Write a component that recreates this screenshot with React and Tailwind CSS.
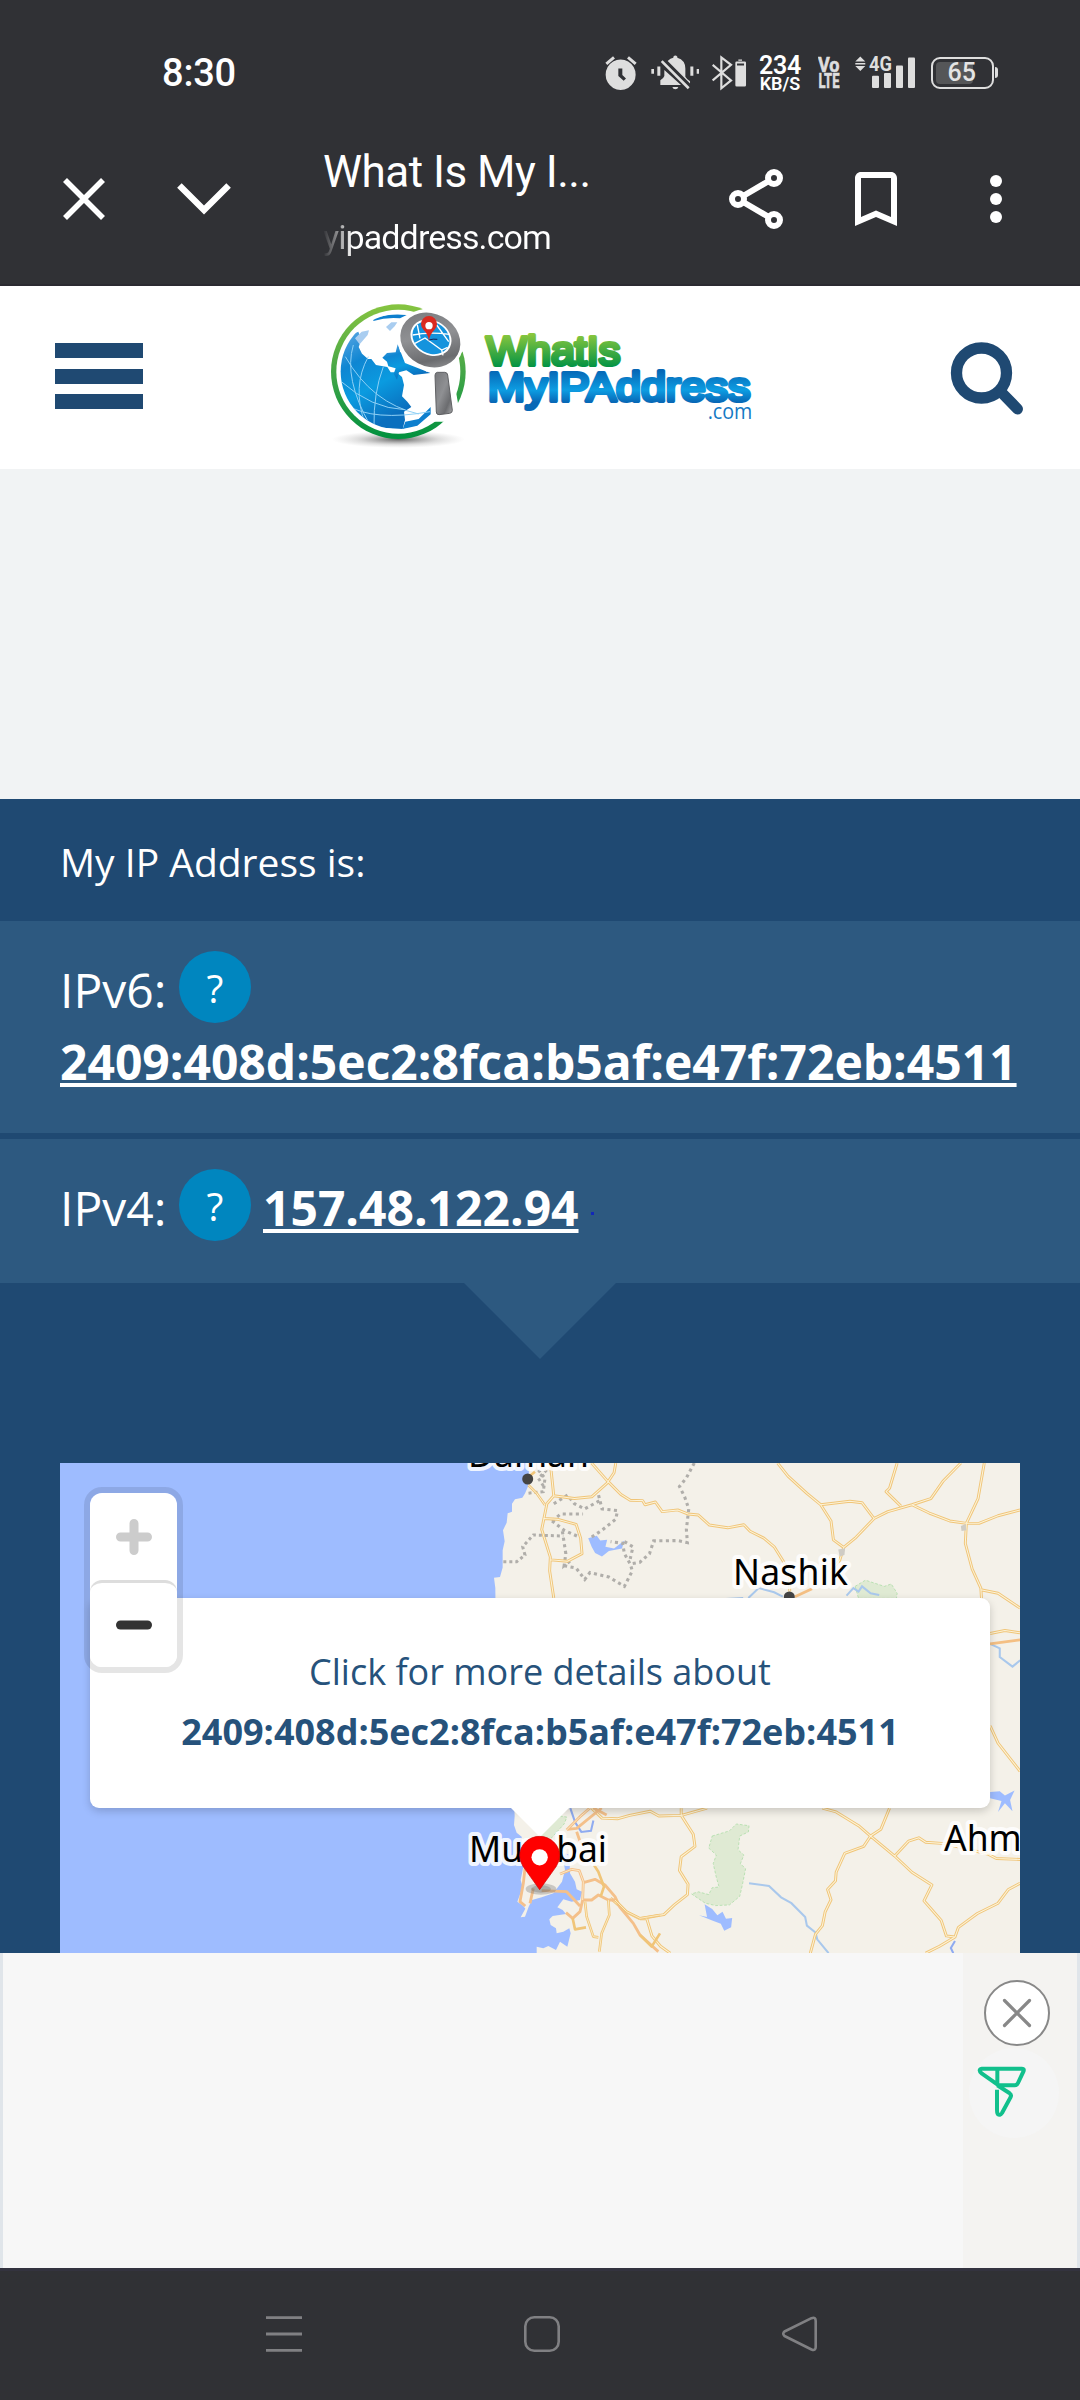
import React from "react";

const SANS = "font-['Open_Sans','Noto_Sans',sans-serif]";

function StatusGlyph({ x, w, className, children }) {
  return (
    <svg viewBox={`${x} 74 ${w} 106`} preserveAspectRatio="none" className={className} fill="#dedede">
      {children}
    </svg>
  );
}

function StatusBar() {
  return (
    <div className="flex h-[145px] items-center pl-[162px] pr-[82px] font-[Roboto,sans-serif] text-white">
      <span className="text-[38px] leading-none font-medium tracking-[-0.2px]">8:30</span>
      <div className="ml-auto flex items-center">
        <StatusGlyph x={136} w={96} className="h-9 w-8">
          <path fillRule="evenodd" d="M183 87a45 45 0 1 1-.1 0zM176 114v22l16 14 7-7-11-10v-19z" />
          <path d="M140 100l23-19M228 100l-23-19" stroke="#dedede" strokeWidth="9" />
        </StatusGlyph>
        <StatusGlyph x={272} w={146} className="ml-[14px] h-9 w-[48.7px]">
          <path d="M273 115h8v14h-8zM291 108h9v27h-9zM390 108h9v27h-9zM409 115h8v14h-8zM336 168h18q-2 7-9 7t-9-7z" />
          <path d="M300 162v-14q10-5 12-12v-18l50 44zM322 92q8-9 17-10v-3q6-7 12 0v3q24 7 24 32v24q3 6 14 13v7z" />
          <path d="M304 92l81 78" stroke="#303135" strokeWidth="18" />
          <path d="M304 92l81 80" stroke="#dedede" strokeWidth="8" />
        </StatusGlyph>
        <StatusGlyph x={456} w={104} className="ml-[12.5px] h-9 w-[34.7px]">
          <path d="M458 103l55 46-29 23V81l29 22-55 46" fill="none" stroke="#dedede" strokeWidth="6.5" />
          <path fillRule="evenodd" d="M535 87h11v4h-11zM530 93h24q4 0 4 4v66q0 4-4 4h-24q-4 0-4-4V97q0-4 4-4zM531 99v6h21v-6z" />
        </StatusGlyph>
        <div className="ml-[12px] flex w-[43px] flex-col items-center pt-[2px] font-semibold">
          <span className="text-[25px] leading-[20px] tracking-[-0.2px]">234</span>
          <span className="text-[18px] leading-[16px]">KB/S</span>
        </div>
        <svg viewBox="0 0 22 36" className="ml-[16px] h-9 w-[22px] fill-[#dedede] stroke-[#dedede] stroke-[0.6px] font-[Roboto,sans-serif] font-bold">
          <text x="0" y="17" fontSize="19.500" textLength="21.500" lengthAdjust="spacingAndGlyphs">Vo</text>
          <text x="0.500" y="33" fontSize="19.500" textLength="21" lengthAdjust="spacingAndGlyphs">LTE</text>
        </svg>
        <svg viewBox="0 0 61 36" className="ml-[15px] h-9 w-[61px] fill-[#dedede] font-[Roboto,sans-serif] font-bold">
          <path d="M5.3 1.400l5 5H.3zM.3 8h10v1.400H.3zM.3 11h10l-5 5z" />
          <text x="14" y="16" fontSize="20.500" textLength="23" lengthAdjust="spacingAndGlyphs">4G</text>
          <rect x="17" y="20.700" width="7" height="12.300" rx="1" />
          <rect x="29" y="18" width="7" height="15" rx="1" />
          <rect x="41" y="10.500" width="7" height="22.500" rx="1" />
          <rect x="53" y="2.400" width="7" height="30.600" rx="1" />
        </svg>
        <div className="ml-[15px] flex items-center">
          <div className="flex h-8 w-[63px] items-center rounded-[9px] border-2 border-[#dedede] p-[3px]">
            <div className="flex h-full w-[37px] items-center rounded-[4px] bg-[#555658] pl-[12px] text-[25px] font-medium text-[#e4e4e4]">
              65
            </div>
          </div>
          <div className="ml-[1.500px] h-[11px] w-[3px] rounded-r bg-[#dedede]" />
        </div>
      </div>
    </div>
  );
}

function Toolbar() {
  return (
    <div className="flex h-[141px] border-b-2 border-[#2b2a31] pl-[63px] text-white">
      <svg viewBox="0 0 42 42" className="mt-[33px] h-[42px] w-[42px]" stroke="#fff" strokeWidth="5.600">
        <path d="M2 2l38 38M40 2L2 40" />
      </svg>
      <svg viewBox="0 0 54 32" className="mt-[38px] ml-[72px] h-8 w-[54px]" fill="none" stroke="#fff" strokeWidth="6.400">
        <path d="M2.400 2.400L27 27 51.600 2.400" />
      </svg>
      <div className="ml-[92px] w-[275px] pt-px font-[Roboto,sans-serif] whitespace-nowrap">
        <div className="text-[44px] leading-[52px] tracking-[-0.500px]">What Is My I...</div>
        <div className="mt-[17px] bg-[linear-gradient(90deg,#303135_0px,#8a8a8c_14px,#fff_30px)] bg-clip-text text-[34px] leading-[44px] tracking-[-0.900px] text-transparent">
          yipaddress.com
        </div>
      </div>
      <div className="mt-[18px] ml-[122px] flex gap-12">
        <svg viewBox="0 0 24 24" className="h-[72px] w-[72px]" fill="none" stroke="#fff" strokeWidth="2">
          <path d="M6 12l12-7M6 12l12 7" />
          <g fill="#303135">
            <circle cx="18" cy="5" r="2" />
            <circle cx="6" cy="12" r="2" />
            <circle cx="18" cy="19" r="2" />
          </g>
        </svg>
        <svg viewBox="0 0 24 24" className="h-[72px] w-[72px]" fill="#fff">
          <path d="M17 3H7c-1.100 0-2 .9-2 2v16l7-3 7 3V5c0-1.100-.9-2-2-2zm0 15l-5-2.180L7 18V5h10v13z" />
        </svg>
        <svg viewBox="0 0 24 24" className="h-[72px] w-[72px]" fill="#fff">
          <circle cx="12" cy="6" r="2" />
          <circle cx="12" cy="12" r="2" />
          <circle cx="12" cy="18" r="2" />
        </svg>
      </div>
    </div>
  );
}

function Logo() {
  return (
    <svg viewBox="60 3 1320 549" className="h-[183px] w-[440px]">
      <defs>
        <linearGradient id="ring" x1="0" y1="0" x2="0" y2="1">
          <stop offset="0" stopColor="#86c440" />
          <stop offset="0.5" stopColor="#45a648" />
          <stop offset="1" stopColor="#00913f" />
        </linearGradient>
        <linearGradient id="sea" x1="0" y1="0" x2="0.4" y2="1">
          <stop offset="0" stopColor="#5fa8e4" />
          <stop offset="0.35" stopColor="#0f86d2" />
          <stop offset="0.65" stopColor="#0a9be0" />
          <stop offset="1" stopColor="#0a6fbe" />
        </linearGradient>
        <linearGradient id="metal" x1="0" y1="0" x2="1" y2="1">
          <stop offset="0" stopColor="#76777a" />
          <stop offset="0.45" stopColor="#8f9093" />
          <stop offset="0.75" stopColor="#6b6c6f" />
          <stop offset="1" stopColor="#a8a9ab" />
        </linearGradient>
        <linearGradient id="green" gradientUnits="userSpaceOnUse" x1="0" y1="147" x2="0" y2="248">
          <stop offset="0" stopColor="#8ac73e" />
          <stop offset="1" stopColor="#009244" />
        </linearGradient>
        <linearGradient id="blue" gradientUnits="userSpaceOnUse" x1="0" y1="256" x2="0" y2="375">
          <stop offset="0" stopColor="#0566b5" />
          <stop offset="0.5" stopColor="#0d9de2" />
          <stop offset="0.8" stopColor="#0868b6" />
        </linearGradient>
        <radialGradient id="shade">
          <stop offset="0" stopColor="#333" stopOpacity="0.75" />
          <stop offset="0.6" stopColor="#666" stopOpacity="0.22" />
          <stop offset="1" stopColor="#999" stopOpacity="0" />
        </radialGradient>
        <clipPath id="ball">
          <circle cx="295" cy="260" r="173" />
        </clipPath>
      </defs>
      <ellipse cx="295" cy="463" rx="200" ry="26" fill="url(#shade)" />
      <circle cx="295" cy="260" r="202" fill="url(#ring)" />
      <circle cx="295" cy="260" r="186" fill="#fff" />
      <g clipPath="url(#ball)">
        <path
          fill="url(#sea)"
          d="M175 140L150 150 118 220V340L200 425 308 432 315 405 312 380 334 366 322 350 306 334 312 300 306 276 290 262 272 262 262 246 228 240 214 222 204 222 186 206 176 186 184 164z"
        />
        <path fill="url(#sea)" d="M247 218l14-14 26-2 6-24 22 56 76 30-50 6-22-14-22 6-6 22-10-18 6-16-22-6-4-14z" />
        <path fill="#0d7fce" d="M308 432l8-22 40-8 36-36v22l-40 34zM220 102q40-18 100-12l-20 10q-40-4-80 8z" />
        <path fill="#a9cdf0" d="M258 126l16-14 18 0-8 12-14 14zM165 160l20-20 22-4-4 14-24 28z" />
        <path fill="none" stroke="#8fd0f5" strokeWidth="3" d="M136 215q80 140 220 172M124 290q90 80 190 84M160 180q-30 100 50 240M205 215q-50 90-10 200M250 245q-30 80-28 180M140 360q80 50 250 20" />
      </g>
      <path fill="#fff" d="M380 66L470 110 500 190 482 205 380 260 300 200 290 120z" />
      <ellipse cx="391" cy="165" rx="102" ry="90" fill="#fff" transform="rotate(28 391 165)" />
      <path d="M394 250h62l24 140-40 20h-46z" fill="#fff" />
      <ellipse cx="391" cy="165" rx="93" ry="79" fill="url(#metal)" transform="rotate(28 391 165)" />
      <ellipse cx="393" cy="158" rx="64" ry="52" fill="#fff" transform="rotate(28 393 158)" />
      <ellipse cx="393" cy="158" rx="58" ry="47" fill="#1593dd" transform="rotate(28 393 158)" />
      <path d="M338 150q50-10 110-2M345 175l30-16 50 36 18-8M410 120l36 50M352 120l8 40M425 195l4 16" fill="none" stroke="#fff" strokeWidth="4" />
      <path d="M386 165q14-4 26-2" stroke="#125" strokeWidth="3" fill="none" />
      <path d="M387 167q-4-22-16-32a24 24 0 1 1 32 0q-14 14-16 32z" fill="#da2a20" />
      <circle cx="387" cy="122" r="11" fill="#fff" />
      <path d="M412 262h22q8 0 9 8l14 106q0 8-8 9l-32 4q-8 0-8-8l-4-110q0-8 7-9z" fill="url(#metal)" stroke="#606164" strokeWidth="3" />
      <g className="font-['Liberation_Sans',sans-serif]" strokeLinejoin="round" strokeLinecap="round" strokeWidth="12">
        <text x="559" y="239" fontSize="122" textLength="402" lengthAdjust="spacingAndGlyphs" fill="url(#green)" stroke="url(#green)">
          WhatIs
        </text>
        <text x="563" y="348" fontSize="122" textLength="788" lengthAdjust="spacingAndGlyphs" fill="url(#blue)" stroke="url(#blue)">
          MyIPAddress
        </text>
      </g>
      <text x="1223" y="402" fontSize="67" textLength="134" lengthAdjust="spacingAndGlyphs" fill="#1479c4" className="font-['Open_Sans',sans-serif]">
        .com
      </text>
    </svg>
  );
}

function SiteHeader() {
  return (
    <header className="flex h-[183px] items-start bg-white pl-[55px]">
      <div className="mt-[57px] flex h-[66px] w-[88px] flex-col justify-between">
        <div className="h-[15px] bg-[#1f4972]" />
        <div className="h-[15px] bg-[#1f4972]" />
        <div className="h-[15px] bg-[#1f4972]" />
      </div>
      <div className="ml-[177px]">
        <Logo />
      </div>
      <svg viewBox="0 0 74 74" className="mt-[56px] ml-[190px] h-[74px] w-[74px]" fill="none" stroke="#1f4972">
        <circle cx="31.500" cy="31" r="25" strokeWidth="11.300" />
        <path d="M52 51L67.500 67" strokeWidth="11" strokeLinecap="round" />
      </svg>
    </header>
  );
}

function Help() {
  return (
    <span className="flex h-[72px] w-[72px] items-center justify-center rounded-full bg-[#0086bf] text-[39px] leading-none">?</span>
  );
}

function Ip({ children }) {
  return (
    <a className="font-bold underline decoration-[4px] underline-offset-[3px] [text-decoration-skip-ink:none]">{children}</a>
  );
}

/* Road lines of the map, drawn on a 1568-unit grid covering the eastern part. */
const ROADS =
  "M150 67L195 118 235 158 262 175 298 176 305 188 335 180 355 208 400 203 430 215 460 218 492 247 545 255 592 246 610 265 650 285 680 310 705 350 725 385 725 440M220 67L215 95 195 125 150 165 100 170 40 162 30 67M40 162L20 185 5 260 30 340 28 380 40 459M10 228L50 230 105 245 118 285 122 330 80 352 30 348M690 67L720 105 775 155 815 188 845 235 852 290 882 312 870 350 840 385M815 188L900 178 935 182 970 228 915 285 882 312M970 228L1010 208 1080 188 1135 170 1170 120 1222 67M1037 67L1015 140 1005 150 1048 192M1080 188L1130 212 1190 235 1238 242 1275 242 1330 220 1394 203M1290 67L1272 170 1238 242 1235 300 1255 375 1280 430 1282 460M1280 435L1330 445 1394 488M1307 562L1350 553 1394 560M1307 830L1330 880 1394 962M150 1069L180 1098 225 1100 260 1090 320 1078 345 1092 410 1090 485 1069M410 1069L410 1090 445 1145 450 1180 410 1210 405 1250 430 1290 428 1320 390 1350 360 1378 290 1390M820 1069L860 1080 925 1120 960 1150 1030 1208 1080 1255 1138 1292 1115 1338 1165 1395 1180 1440 1205 1443 1215 1415 1270 1375 1330 1345 1360 1305 1394 1287M1015 1069L990 1130 960 1150 940 1180 885 1200 860 1255 858 1280 835 1305 845 1335 828 1370 820 1410 800 1435 785 1490M1030 1208L1070 1165 1100 1155 1120 1168 1175 1172 1300 1202 1325 1215 1394 1218M1205 1443L1160 1470 1120 1490M290 1390L310 1390 325 1440 350 1470 378 1490M205 1330L250 1370 290 1390";

const BORDER =
  "M448 67L425 110 405 135 420 165 432 200 425 260 428 298 400 292 330 293 318 330 290 355 262 360 245 330 240 300 205 295M170 160L180 200 225 205 220 230 180 262 145 285M40 185L80 160 100 185 130 200 175 175M35 235L60 215 125 215M35 235L70 262 110 280M65 265L75 330 70 365 95 345M70 365L105 372 130 405 145 385 200 398 245 425 268 380 262 360M245 295L270 310 262 345";

function MapDrawing() {
  return (
    <svg viewBox="60 1463 960 490" className="block h-[490px] w-[960px]">
      <defs>
        <filter id="soft" x="-20%" y="-20%" width="140%" height="150%">
          <feGaussianBlur stdDeviation="3" />
        </filter>
      </defs>
      <rect x="60" y="1463" width="960" height="490" fill="#9ebcff" />
      <g fill="#f4f1e9">
        <path
          transform="translate(40 1440) scale(0.33333 0.34439)"
          d="M1467 60L1466 130 1455 155 1447 168 1425 172 1416 185 1416 208 1403 213 1400 240 1389 262 1394 294 1388 320 1388 370 1380 398 1362 400 1366 430 1372 1000H1800V1100H3000V60z"
        />
        <path
          transform="translate(480 1800) scale(0.33333)"
          d="M102 0L104 48 102 75 110 98 125 110 132 190 122 240 128 262 112 305 130 318 136 326 122 352 135 350 146 320 156 300 185 292 220 280 246 245 255 210 250 180 255 160 268 165 270 220 285 245 290 268 306 275 300 300 275 305 250 298 232 322 248 330 258 342 218 348 208 358 212 375 228 385 230 400 250 395 268 385 272 400 262 440 240 425 228 450 205 438 190 445 170 440 170 480H1700V0z"
        />
      </g>
      <g transform="translate(540 1440) scale(0.34439)">
        <path fill="#dfead3" stroke="#a4dba0" strokeWidth="2" strokeDasharray="8 5" d="M500 1150L550 1135 570 1115 607 1120 605 1138 580 1150 575 1190 592 1205 582 1230 597 1245 588 1290 580 1325 550 1350 510 1352 480 1345 440 1318 460 1312 490 1320 500 1300 520 1298 512 1270 503 1230 512 1205 490 1185zM915 425L945 407 1000 425 1020 418 1037 445 1035 460H925zM0 1145L60 1092 78 1095 70 1115 20 1170z" />
        <g fill="#9ebcff">
          <path d="M140 285L165 278 175 292 195 290 190 310 215 315 245 292 238 315 200 322 180 338 160 328 150 310zM462 1380L485 1385 478 1348 500 1362 515 1380 530 1370 540 1390 558 1388 555 1415 535 1425 525 1405 500 1395zM1307 1022L1335 1020 1350 1032 1378 1018 1365 1045 1372 1078 1350 1055 1330 1080 1340 1048 1307 1040z" />
        </g>
        <path fill="none" stroke="#a9c8ec" strokeWidth="6" d="M605 459L635 430 680 442 705 455M890 452L910 430 925 440 935 425 960 445 985 450M540 462L590 459M1307 592L1335 605 1335 630 1372 658 1394 640M607 1287L665 1295 700 1328 730 1345 770 1385 775 1410 800 1430 805 1450 838 1490" />
        <path fill="none" stroke="#8fabf0" strokeWidth="6" d="M88 1069L102 1110 120 1138 148 1135 155 1105M1205 1455L1193 1475 1200 1490" />
        <path fill="none" stroke="#b0aeaa" strokeWidth="9" strokeDasharray="9 10" d={BORDER} />
        <path fill="none" stroke="#f0c578" strokeWidth="8.500" strokeLinejoin="round" d={ROADS} />
        <path fill="none" stroke="#fcf3d9" strokeWidth="3" strokeLinejoin="round" d={ROADS} />
        <path fill="none" stroke="#f4bf83" strokeWidth="8" d="M740 455L790 432M1307 592L1394 580" />
        <path fill="#cfccc5" d="M1222 250l14-6 2 18-14 2zM866 318l20-4-2 20-14 4z" />
      </g>
      <g transform="translate(480 1455) scale(0.33333)" fill="none">
        <path stroke="#b0aeaa" strokeWidth="9" strokeDasharray="9 9" d="M70 320L110 320 135 300 128 275 160 240 250 243M175 45L195 70 190 110 140 115M200 45L175 70 195 100" />
        <path stroke="#f0c578" strokeWidth="8" d="M145 90L170 115 195 150M165 50L150 62" />
        <path stroke="#fcf3d9" strokeWidth="3" d="M145 90L170 115 195 150" />
      </g>
      <g transform="translate(480 1800) scale(0.33333)" fill="none" strokeLinejoin="round">
        <path stroke="#f4c08a" strokeWidth="8.500" d="M260 90L300 50 330 24M262 88L290 85 365 24M340 24L380 45M290 95L302 130M240 222L275 208 298 212 310 245 308 300 300 335 278 355 258 338M310 248L345 238 375 255 405 290 420 322 460 370 480 405 535 455M185 272L260 275 300 318M310 300L335 300 355 285 385 300 405 300M135 205L130 250 120 305 136 318M160 265L150 310" />
        <path stroke="#f0c578" strokeWidth="8" d="M342 195L355 215 372 260 362 290M405 300L440 335 480 355 540 345M385 300L388 345 365 400 358 455M315 305L320 350 340 410 355 412M278 355L285 388 318 382M480 405L515 440 540 400" />
        <path stroke="#fcf0d2" strokeWidth="2.500" d="M405 300L440 335 480 355 540 345M385 300L388 345 365 400 358 455M315 305L320 350 340 410 355 412M260 90L300 50 330 24M240 222L275 208 298 212 310 245 308 300" />
      </g>
      <circle cx="527.700" cy="1479" r="5.500" fill="#444" />
      <circle cx="789.300" cy="1597" r="5.500" fill="#444" />
      <g className="font-['Noto_Sans',sans-serif]" fontSize="35.500" stroke="#fff" strokeWidth="8" strokeLinejoin="round" strokeOpacity="0.85" paintOrder="stroke">
        <text x="468" y="1466.500" textLength="121">Daman</text>
        <text x="733" y="1584.500" textLength="115">Nashik</text>
        <text x="469" y="1861.500" textLength="138">Mumbai</text>
        <text x="944" y="1850.500">Ahm</text>
      </g>
    </svg>
  );
}

function Pin() {
  return (
    <svg viewBox="100 100 160 200" className="absolute top-[370px] left-[453.300px] h-[66.700px] w-[53.300px]">
      <ellipse cx="184" cy="268" rx="46" ry="17" fill="#777" opacity="0.35" />
      <ellipse cx="184" cy="268" rx="30" ry="11" fill="#555" opacity="0.25" />
      <path d="M180 270L130 200Q120 184 120 168A60 58 0 0 1 240 168Q240 184 230 200z" fill="#f00" stroke="#d00000" strokeWidth="2" />
      <circle cx="180" cy="173" r="24.500" fill="#fff" />
    </svg>
  );
}

function IpMap() {
  return (
    <div className="relative mx-[60px] h-[490px] overflow-hidden">
      <MapDrawing />
      <div className="absolute top-[135px] left-[30px] h-[210px] w-[900px] rounded-[9px] bg-white pt-[44px] text-center text-[36px] leading-[60px] text-[#26527b] shadow-[0_3px_8px_rgba(0,0,0,0.18)]">
        <div>Click for more details about</div>
        <div className="font-bold">2409:408d:5ec2:8fca:b5af:e47f:72eb:4511</div>
      </div>
      <div className="absolute top-[344px] left-[450px] h-[30px] w-[60px] bg-white [clip-path:polygon(0_0,100%_0,50%_100%)]" />
      <Pin />
      <div className="absolute top-[24px] left-[24px] h-[186px] w-[99px] rounded-[18px] border-6 border-black/10 bg-clip-padding">
        <div className="flex h-[174px] flex-col overflow-hidden rounded-[12px] bg-white">
          <div className="flex h-[87px] items-center justify-center">
            <svg viewBox="0 0 36 36" className="h-9 w-9" stroke="#ccc" strokeWidth="9" strokeLinecap="round">
              <path d="M4.500 18h27M18 4.500v27" />
            </svg>
          </div>
          <div className="flex h-[87px] items-center justify-center rounded-[12px] border-t-3 border-[#ddd]">
            <svg viewBox="0 0 36 36" className="h-9 w-9" stroke="#333" strokeWidth="9" strokeLinecap="round">
              <path d="M4.500 18h27" />
            </svg>
          </div>
        </div>
      </div>
    </div>
  );
}

function AdSlot() {
  return (
    <div className="flex h-[315px] border-x-3 border-[#e0e5ea] bg-[#f7f7f7]">
      <div className="ml-auto w-[114px] bg-[#f4f3f1]">
        <div className="mt-[27px] ml-[21px] flex h-[66px] w-[66px] items-center justify-center rounded-full border-[2.500px] border-[#888] bg-white">
          <svg viewBox="0 0 30 30" className="h-[30px] w-[30px]" stroke="#888" strokeWidth="3.200" strokeLinecap="round">
            <path d="M2.500 2.500l25 25M27.500 2.500l-25 25" />
          </svg>
        </div>
        <svg viewBox="207 355 270 270" className="mt-[2px] ml-[6px] h-[90px] w-[90px]" fill="none" stroke="#11c08c" strokeWidth="12" strokeLinejoin="round">
          <circle cx="342" cy="490" r="135" fill="#f5f5f5" stroke="none" />
          <path d="M246 417H366Q374 417 370 426L354 460Q351 467 344 467H296L246 432Q232 420 246 417zM292 417V467M292 467L328 490Q336 496 331 504L306 550Q300 559 293 553Q291 550 291 540V480" />
        </svg>
      </div>
    </div>
  );
}

function NavBar() {
  return (
    <nav className="flex h-[132px] gap-[222px] border-t-3 border-[#33333f] bg-[#303135] pt-[45px] pl-[266px]">
      <svg viewBox="0 0 36 36" className="h-9 w-9" stroke="#808083" strokeWidth="2.800">
        <path d="M0 1.700h36M0 18h36M0 34.300h36" />
      </svg>
      <svg viewBox="0 0 36 36" className="h-9 w-9" fill="none" stroke="#808083" strokeWidth="2.600">
        <rect x="1.300" y="1.300" width="33.400" height="33.400" rx="9" />
      </svg>
      <svg viewBox="0 0 36 36" className="h-9 w-9" fill="none" stroke="#808083" strokeWidth="2.600" strokeLinejoin="round">
        <path d="M2.500 15.500Q0 17.700 2.500 20L29.500 33.500Q33.700 35.200 33.700 31V5Q33.700 0.500 29.500 2.200z" />
      </svg>
    </nav>
  );
}

export default function App() {
  return (
    <div className={`h-[2400px] w-[1080px] overflow-hidden bg-white ${SANS}`}>
      <div className="h-[286px] bg-[#303135]">
        <StatusBar />
        <Toolbar />
      </div>
      <SiteHeader />
      <div className="h-[330px] bg-[#f1f3f4]" />
      <main className="h-[1154px] bg-[#1f4972] text-white">
        <div className="flex h-[122px] items-center pt-[5px] pl-[60px] text-[39px]">My IP Address is:</div>
        <section className="h-[212px] bg-[#2d5980] pt-[30px] pl-[60px] text-[48px]">
          <div className="flex h-[72px] items-center">
            <span className="w-[119px] pt-[6px]">IPv6:</span>
            <Help />
          </div>
          <div className="pt-[3px] leading-[72px]">
            <Ip>2409:408d:5ec2:8fca:b5af:e47f:72eb:4511</Ip>
          </div>
        </section>
        <section className="mt-[6px] flex h-[144px] bg-[#2d5980] pt-[30px] pl-[60px] text-[48px]">
          <div className="flex h-[72px] items-center">
            <span className="w-[119px] pt-[6px]">IPv4:</span>
            <Help />
            <span className="ml-3 pt-[6px]">
              <Ip>157.48.122.94</Ip>
            </span>
            <span className="mt-4 ml-3 h-[3px] w-[3px] bg-[#1227b8]" />
          </div>
        </section>
        <div className="mx-auto mb-[104px] h-[76px] w-[152px] bg-[#2d5980] [clip-path:polygon(0_0,100%_0,50%_100%)]" />
        <IpMap />
      </main>
      <AdSlot />
      <NavBar />
    </div>
  );
}
